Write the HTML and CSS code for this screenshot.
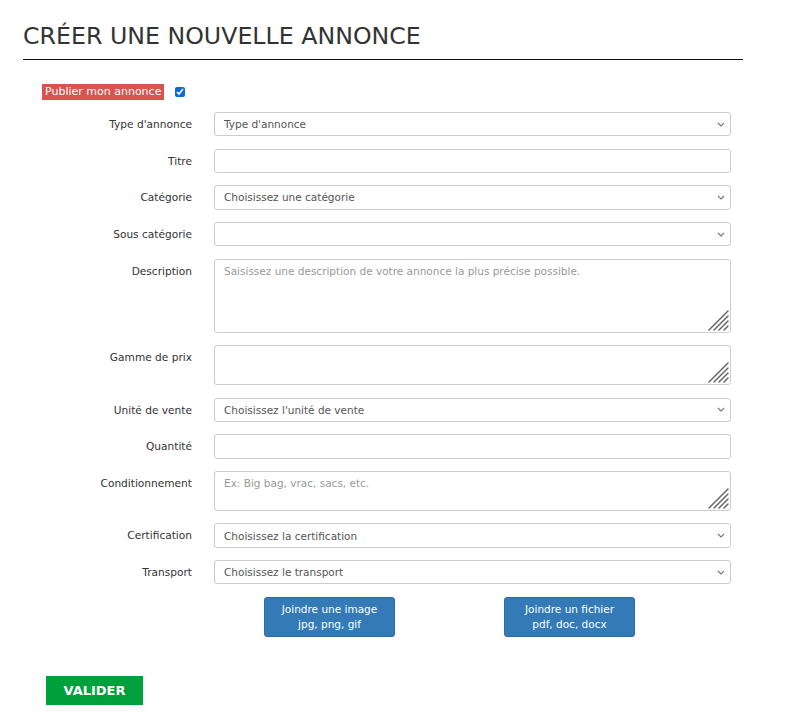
FILE: index.html
```html
<!DOCTYPE html>
<html lang="fr">
<head>
<meta charset="utf-8">
<title>Créer une nouvelle annonce</title>
<link rel="stylesheet" href="styles.css">
</head>
<body>
<div class="page">
  <h1 class="page-title">CRÉER UNE NOUVELLE ANNONCE</h1>

  <form class="ad-form">
    <div class="publish">
      <span class="badge">Publier mon annonce</span>
      <input type="checkbox" class="check" checked>
    </div>

    <div class="grid">
      <label class="lbl">Type d'annonce</label>
      <select class="field"><option>Type d'annonce</option></select>

      <label class="lbl">Titre</label>
      <input type="text" class="field">

      <label class="lbl">Catégorie</label>
      <select class="field"><option>Choisissez une catégorie</option></select>

      <label class="lbl">Sous catégorie</label>
      <select class="field"><option></option></select>

      <label class="lbl">Description</label>
      <div class="area-wrap">
        <textarea class="field area-lg" placeholder="Saisissez une description de votre annonce la plus précise possible."></textarea>
        <svg class="grip" width="22" height="22" viewBox="0 0 22 22"><path d="M21 2L2 21M21 7L7 21M21 12L12 21M21 17L17 21"/></svg>
      </div>

      <label class="lbl">Gamme de prix</label>
      <div class="area-wrap">
        <textarea class="field area-sm"></textarea>
        <svg class="grip" width="22" height="22" viewBox="0 0 22 22"><path d="M21 2L2 21M21 7L7 21M21 12L12 21M21 17L17 21"/></svg>
      </div>

      <label class="lbl">Unité de vente</label>
      <select class="field"><option>Choisissez l'unité de vente</option></select>

      <label class="lbl">Quantité</label>
      <input type="text" class="field">

      <label class="lbl">Conditionnement</label>
      <div class="area-wrap">
        <textarea class="field area-sm" placeholder="Ex: Big bag, vrac, sacs, etc."></textarea>
        <svg class="grip" width="22" height="22" viewBox="0 0 22 22"><path d="M21 2L2 21M21 7L7 21M21 12L12 21M21 17L17 21"/></svg>
      </div>

      <label class="lbl">Certification</label>
      <select class="field"><option>Choisissez la certification</option></select>

      <label class="lbl">Transport</label>
      <select class="field"><option>Choisissez le transport</option></select>

      <span></span>
      <div class="uploads">
        <button type="button" class="btn-upload">Joindre une image<br>jpg, png, gif</button>
        <button type="button" class="btn-upload">Joindre un fichier<br>pdf, doc, docx</button>
      </div>
    </div>

    <button type="submit" class="btn-submit">VALIDER</button>
  </form>
</div>
</body>
</html>
```

FILE: styles.css
```css
* { box-sizing: border-box; }

body {
  margin: 0;
  background: #fff;
  color: #333;
  font-family: "DejaVu Sans", "Open Sans", sans-serif;
}

.page {
  width: 743px;
  padding: 23px 0 0 23px;
}

.page-title {
  margin: 0;
  padding-bottom: 10px;
  border-bottom: 1px solid #111;
  font-size: 23.7px;
  font-weight: normal;
  line-height: 26px;
  color: #333;
}

.ad-form {
  padding-top: 23px;
}

.publish {
  display: flex;
  align-items: center;
  gap: 11px;
  padding-left: 19px;
  height: 17px;
}

.badge {
  background: #d9534f;
  color: #fff;
  font-size: 11px;
  line-height: 16px;
  padding: 0 3px;
}

.check {
  width: 10px;
  height: 10px;
  margin: 0;
  accent-color: #0b6bd6;
}

.grid {
  display: grid;
  grid-template-columns: 169px 517px;
  column-gap: 22px;
  row-gap: 12.33px;
  margin-top: 12px;
  align-items: start;
}

.lbl {
  text-align: right;
  font-size: 10.6px;
  height: 24.33px;
  line-height: 25.5px;
  color: #333;
}

.field {
  display: block;
  width: 100%;
  height: 24.33px;
  margin: 0;
  border: 1px solid #ccc;
  border-radius: 3px;
  background-color: #fff;
  font-family: inherit;
  font-size: 10.5px;
  color: #555;
  padding: 0 9px;
}

/* select with a light chevron instead of the native arrow */
select.field {
  appearance: none;
  -webkit-appearance: none;
  padding: 0 24px 0 9px;
  background-image: url("data:image/svg+xml,%3Csvg xmlns='http://www.w3.org/2000/svg' width='8' height='5' viewBox='0 0 8 5'%3E%3Cpath d='M1 1l3 3 3-3' fill='none' stroke='%23777' stroke-width='1.1'/%3E%3C/svg%3E");
  background-repeat: no-repeat;
  background-position: right 5px center;
  background-size: 8px 5px;
}

textarea.field {
  padding: 4px 9px;
  line-height: 14px;
  resize: none;
}

.field::placeholder { color: #999; }

.area-lg { height: 74.5px; }
.area-sm { height: 40px; }

/* textarea with a hatched grip drawn in its corner */
.area-wrap {
  position: relative;
}

.grip {
  position: absolute;
  right: 2px;
  bottom: 2px;
  pointer-events: none;
}

.grip path {
  fill: none;
  stroke: #666;
  stroke-width: 1.5;
  stroke-linecap: round;
}

.uploads {
  display: flex;
  gap: 109px;
  padding-left: 50px;
  margin-top: 0.5px;
}

.btn-upload {
  width: 131px;
  height: 40px;
  border: 1px solid #2e6da4;
  border-radius: 3px;
  background: #337ab7;
  color: #fff;
  font-family: inherit;
  font-size: 10.5px;
  line-height: 15px;
  padding: 0;
}

.btn-submit {
  display: block;
  margin: 39px 0 0 23px;
  width: 97px;
  height: 29px;
  border: none;
  background: #00a03c;
  color: #fff;
  font-family: inherit;
  font-weight: bold;
  font-size: 13px;
  padding: 0;
}
```
